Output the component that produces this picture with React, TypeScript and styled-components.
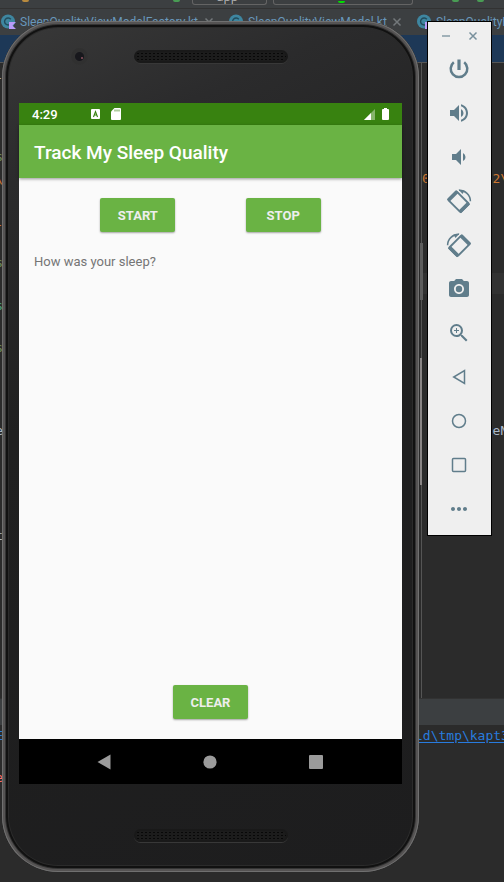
import React from "react";
import styled, { createGlobalStyle } from "styled-components";
import { MdMoreHoriz, MdPhotoCamera, MdVolumeDown, MdVolumeUp, MdZoomIn } from "react-icons/md";

const GlobalStyle = createGlobalStyle`
  * { box-sizing: border-box; }
  body { margin: 0; background: #2b2b2b; }
  button { font: inherit; cursor: pointer; }
`;

const Desktop = styled.div`
  display: grid;
  min-height: 100vh;
  overflow: hidden;
  > * { grid-area: 1 / 1; min-width: 0; }
`;

/* ---------- IDE behind the emulator ---------- */

const Ide = styled.div`
  display: flex;
  flex-direction: column;
  background: #2b2b2b;
  font-family: "DejaVu Sans Mono", monospace;
  font-size: 13px;
  overflow: hidden;
`;

const RunBar = styled.div`
  flex: none;
  display: flex;
  align-items: flex-start;
  gap: 6px;
  height: 9px;
  padding-right: 14px;
  background: #3c3f41;
  border-bottom: 1px solid #323232;
`;

const RunIcons = styled.div<{ $width?: number }>`
  flex: ${(p) => (p.$width ? "none" : 1)};
  width: ${(p) => (p.$width ? `${p.$width}px` : "auto")};
  display: flex;
  justify-content: space-between;
  padding-left: ${(p) => (p.$width ? 22 : 33)}px;
  padding-right: 6px;
`;

const RunMark = styled.span<{ $color: string }>`
  width: 7px;
  height: 2px;
  border-radius: 0 0 4px 4px;
  background: ${(p) => p.$color};
`;

const RunSelect = styled.div<{ $width: number }>`
  flex: none;
  display: flex;
  align-items: flex-end;
  justify-content: center;
  width: ${(p) => p.$width}px;
  height: 5px;
  padding: 0 24px 1px 20px;
  overflow: hidden;
  border: 1px solid #646464;
  border-top: 0;
  border-radius: 0 0 3px 3px;
  color: #bbbbbb;
  font: 12px/12px "Open Sans", sans-serif;
`;

const TabStrip = styled.div`
  flex: none;
  display: flex;
  height: 26px;
  background: #3c3f41;
`;

const Tab = styled.div<{ $width: number }>`
  flex: none;
  display: flex;
  align-items: center;
  gap: 4px;
  width: ${(p) => p.$width}px;
  color: #6897bb;
  font: 12px/26px Roboto, sans-serif;
  white-space: nowrap;
  svg { flex: none; }
`;

const TabClose = styled.button`
  display: flex;
  margin-left: auto;
  margin-right: 14px;
  padding: 0;
  border: 0;
  background: none;
  color: #73787b;
`;

const Notice = styled.div`
  flex: none;
  height: 28px;
  background: #1d3857;
  border-bottom: 1px solid #555555;
`;

const Editor = styled.div`
  flex: 1 0 635px;
  display: flex;
`;

const EditorMain = styled.div`
  flex: 1;
  border-right: 1px solid #555555;
`;

const EditorSide = styled.div`
  flex: none;
  width: 82px;
`;

const CodeLine = styled.div<{ $color: string; $space: number; $active?: boolean }>`
  height: 21px;
  margin-top: ${(p) => p.$space}px;
  background: ${(p) => (p.$active ? "#323232" : "none")};
  color: ${(p) => p.$color};
  line-height: 21px;
  white-space: pre;
`;

const GutterText = styled.div`
  width: 3px;
  overflow: hidden;
  direction: rtl;
`;

const PanelHeader = styled.div`
  flex: none;
  height: 27px;
  background: #3c3f41;
  border-top: 1px solid #323232;
`;

const Console = styled.div`
  flex: 1 0 157px;
`;

const ConsoleLine = styled.div<{ $color: string; $space: number }>`
  display: flex;
  justify-content: space-between;
  height: 21px;
  margin-top: ${(p) => p.$space}px;
  color: ${(p) => p.$color};
  line-height: 21px;
  white-space: pre;
`;

const PathLink = styled.a`
  width: 89px;
  overflow: hidden;
  color: #287bde;
  text-decoration: underline;
  text-underline-offset: 2px;
`;

/* ---------- Emulator ---------- */

const Emulator = styled.div`
  position: relative;
  display: flex;
  align-items: flex-start;
  gap: 8px;
  padding: 21px 12px 10px 2px;
`;

const Phone = styled.div`
  position: relative;
  flex: 1;
  align-self: stretch;
  display: flex;
  flex-direction: column;
  padding: 0 17px;
  border-radius: 56px;
  background: linear-gradient(155deg, #393939 0%, #2b2b2c 16%, #202020 40%, #1d1d1e 100%);
  box-shadow:
    inset 0 0 0 1px #707070,
    inset 0 0 0 3px #555353,
    inset 0 0 0 4px #343434,
    inset 0 0 0 6px #111111,
    inset 0 0 0 7px #2b2b2b;
`;

const SideKey = styled.div<{ $top: number; $height: number; $wide?: boolean }>`
  position: absolute;
  left: calc(100% + 1px);
  top: ${(p) => p.$top}px;
  width: ${(p) => (p.$wide ? 3 : 2)}px;
  height: ${(p) => p.$height}px;
  background: ${(p) => (p.$wide ? "#5d5d5d" : "#898585")};
`;

const Bezel = styled.div<{ $height: number }>`
  position: relative;
  flex: none;
  display: flex;
  align-items: center;
  justify-content: center;
  height: ${(p) => p.$height}px;
  padding-bottom: ${(p) => (p.$height > 84 ? 0 : 12)}px;
  padding-top: ${(p) => (p.$height > 84 ? 15 : 0)}px;
`;

const Speaker = styled.div`
  width: 154px;
  height: 13px;
  border-radius: 7px;
  border: 2px solid #191919;
  background: radial-gradient(circle, #080808 1px, #1c1c1c 1px) 0 0 / 4px 3px;
  box-shadow: 0 1px 0 #383838;
`;

const Lens = styled.div`
  position: absolute;
  left: 52px;
  top: 27px;
  width: 17px;
  height: 17px;
  border-radius: 50%;
  background: radial-gradient(circle, #17171c 0 4px, #303030 5px 8px);
  &::after {
    content: "";
    display: block;
    width: 2px;
    height: 2px;
    margin: 9px 0 0 10px;
    background: #70434e;
  }
`;

const Screen = styled.div`
  flex: 1;
  display: flex;
  flex-direction: column;
  background: #fafafa;
  font-family: Roboto, sans-serif;
`;

const StatusBar = styled.div`
  flex: none;
  display: flex;
  align-items: center;
  height: 22px;
  padding: 0 13px;
  background: #388210;
  color: #ffffff;
  font-size: 13px;
  font-weight: 500;
  svg { display: block; }
`;

const Notices = styled.div`
  display: flex;
  align-items: center;
  gap: 11px;
  margin-left: 33px;
`;

const Signals = styled.div`
  display: flex;
  align-items: center;
  gap: 7px;
  margin-left: auto;
`;

const AppBar = styled.header`
  flex: none;
  display: flex;
  align-items: center;
  height: 53px;
  padding: 2px 15px 0;
  background: #6ab344;
  color: #ffffff;
  box-shadow: 0 1px 3px rgba(0, 0, 0, 0.4);
`;

const Title = styled.h1`
  margin: 0;
  font-size: 19px;
  line-height: 24px;
  font-weight: 500;
`;

const Content = styled.main`
  flex: 1;
  display: flex;
  flex-direction: column;
  padding: 20px 11px;
`;

const ButtonRow = styled.div`
  display: flex;
  justify-content: space-evenly;
`;

const GreenButton = styled.button`
  width: 75px;
  height: 34px;
  padding: 0;
  border: 0;
  border-radius: 2px;
  background: #6ab344;
  color: #eeeeee;
  font-size: 13px;
  font-weight: 700;
  box-shadow: 0 1px 2px rgba(0, 0, 0, 0.35);
`;

const Question = styled.p`
  margin: 20px 4px auto;
  color: #757575;
  font-size: 13px;
  line-height: 20px;
`;

const NavBar = styled.nav`
  flex: none;
  display: grid;
  grid-template-columns: repeat(3, 106px);
  justify-content: center;
  height: 45px;
  padding-right: 2px;
  background: #000000;
`;

const NavButton = styled.button`
  display: flex;
  align-items: center;
  justify-content: center;
  padding: 0;
  border: 0;
  background: none;
  color: #9b9b9b;
`;

const ToolWindow = styled.aside`
  flex: none;
  width: 65px;
  padding: 0 2px 4px 0;
  border: 1px solid #000000;
  background: #efefef;
  color: #607d8b;
`;

const WindowBar = styled.div`
  display: flex;
  align-items: center;
  justify-content: center;
  gap: 17px;
  height: 25px;
  padding: 3px 0 0 1px;
`;

const WindowButton = styled.button`
  display: flex;
  padding: 0;
  border: 0;
  background: none;
  color: #78909c;
`;

const ToolButton = styled.button`
  display: flex;
  align-items: center;
  justify-content: center;
  width: 100%;
  height: 44px;
  padding: 0;
  border: 0;
  background: none;
  color: inherit;
`;

/* ---------- Drawings ---------- */

const CrossIcon = () => (
  <svg width="10" height="10" viewBox="0 0 10 10" fill="none" stroke="currentColor" strokeWidth="1.5">
    <path d="M1.5 1.5l7 7M8.5 1.5l-7 7" />
  </svg>
);

const KotlinIcon = () => (
  <svg width="16" height="16" viewBox="0 0 16 16">
    <circle cx="8" cy="7.5" r="7" fill="#3e86a0" />
    <path d="M10.8 5.3A3.5 3.5 0 1 0 10.8 9.7" fill="none" stroke="#234b5b" strokeWidth="1.4" />
    <path d="M9 8h7l-3.5 3.5L16 15H9z" fill="#b99bf8" />
  </svg>
);

const PowerIcon = () => (
  <svg width="24" height="24" viewBox="0 0 24 24" fill="none" stroke="currentColor">
    <path d="M6.8 5.2A8.3 8.3 0 1 0 17.2 5.2" strokeWidth="2.5" />
    <path d="M12 2.5v10.5" strokeWidth="3.2" />
  </svg>
);

const RotateIcon = ({ mirrored = false }: { mirrored?: boolean }) => (
  <svg width="24" height="24" viewBox="0 0 24 24" fill="none" stroke="currentColor" overflow="visible">
    <g transform={mirrored ? "translate(24 0) scale(-1 1)" : undefined}>
      <g transform="rotate(45 11.5 12.8)">
        <rect x="2.5" y="6.8" width="18" height="12" rx="1" strokeWidth="1.9" />
        <path d="M3.4 6.4v12.8M19.6 6.4v12.8" strokeWidth="3.6" />
      </g>
      <path d="M12 1.3A11 11 0 0 1 23.4 12.2" strokeWidth="1.5" />
      <path d="M11.5 .6l6 1.2-2 3.2z" fill="currentColor" stroke="none" />
    </g>
  </svg>
);

const BackIcon = () => (
  <svg width="24" height="24" viewBox="0 0 24 24" fill="none" stroke="currentColor" strokeWidth="1.5">
    <path d="M17.5 5.5v13L6.7 12z" />
  </svg>
);

const HomeIcon = () => (
  <svg width="24" height="24" viewBox="0 0 24 24" fill="none" stroke="currentColor" strokeWidth="1.5">
    <circle cx="12" cy="12" r="6.5" />
  </svg>
);

const OverviewIcon = () => (
  <svg width="24" height="24" viewBox="0 0 24 24" fill="none" stroke="currentColor" strokeWidth="1.5">
    <rect x="5.5" y="5.5" width="13" height="13" rx="1" />
  </svg>
);

const tools = [
  { label: "Power", icon: <PowerIcon /> },
  { label: "Volume up", icon: <MdVolumeUp size={24} /> },
  { label: "Volume down", icon: <MdVolumeDown size={24} /> },
  { label: "Rotate left", icon: <RotateIcon /> },
  { label: "Rotate right", icon: <RotateIcon mirrored /> },
  { label: "Take screenshot", icon: <MdPhotoCamera size={24} /> },
  { label: "Zoom mode", icon: <MdZoomIn size={24} /> },
  { label: "Back", icon: <BackIcon /> },
  { label: "Home", icon: <HomeIcon /> },
  { label: "Overview", icon: <OverviewIcon /> },
  { label: "More", icon: <MdMoreHoriz size={24} /> },
];

const gutterLines = [
  { text: "-", color: "#a9b7c6", space: 4 },
  { text: "s", color: "#6a8759", space: 58 },
  { text: "\\", color: "#cc7832", space: 1 },
  { text: "-", color: "#cc7832", space: 25 },
  { text: "s", color: "#6a8759", space: 17 },
  { text: "s", color: "#499c7a", space: 22 },
  { text: "s", color: "#6a8759", space: 21 },
  { text: "e", color: "#a9b7c6", space: 62 },
  { text: "t", color: "#a9b7c6", space: 84 },
];

export default function App() {
  return (
    <>
      <GlobalStyle />
      <Desktop>
        <Ide>
          <RunBar>
            <RunIcons $width={186}>
              <RunMark $color="#b88a3e" />
              <RunMark $color="#499c54" />
            </RunIcons>
            <RunSelect $width={75}>app</RunSelect>
            <RunSelect $width={140}>
              <RunMark $color="#00e000" />
            </RunSelect>
            <RunIcons>
              <RunMark $color="#499c54" />
              <RunMark $color="#499c54" />
            </RunIcons>
          </RunBar>
          <TabStrip>
            <Tab $width={228}>
              <KotlinIcon />
              SleepQualityViewModelFactory.kt
              <TabClose aria-label="Close SleepQualityViewModelFactory.kt"><CrossIcon /></TabClose>
            </Tab>
            <Tab $width={188}>
              <KotlinIcon />
              SleepQualityViewModel.kt
              <TabClose aria-label="Close SleepQualityViewModel.kt"><CrossIcon /></TabClose>
            </Tab>
            <Tab $width={228}>
              <KotlinIcon />
              SleepQualityFragment.kt
            </Tab>
          </TabStrip>
          <Notice />
          <Editor>
            <EditorMain>
              {gutterLines.map((line, i) => (
                <CodeLine key={i} $color={line.color} $space={line.space}>
                  <GutterText>{line.text}</GutterText>
                </CodeLine>
              ))}
            </EditorMain>
            <EditorSide>
              <CodeLine $color="#cc7832" $space={105}>{"0        2\\"}</CodeLine>
              <CodeLine $color="#a9b7c6" $space={84} $active> </CodeLine>
              <CodeLine $color="#a9b7c6" $space={126}>{"         eN"}</CodeLine>
            </EditorSide>
          </Editor>
          <PanelHeader />
          <Console>
            <ConsoleLine $color="#287bde" $space={0}>
              <GutterText>E</GutterText>
              <PathLink href="#kapt">{"ld\\tmp\\kapt3"}</PathLink>
            </ConsoleLine>
            <ConsoleLine $color="#ff6b68" $space={21}>
              <GutterText>e</GutterText>
            </ConsoleLine>
          </Console>
        </Ide>

        <Emulator>
          <Phone>
            <SideKey $top={222} $height={57} $wide />
            <SideKey $top={337} $height={127} />
            <Bezel $height={82}>
              <Lens />
              <Speaker />
            </Bezel>
            <Screen>
              <StatusBar>
                <time>4:29</time>
                <Notices>
                  <svg width="9" height="10" viewBox="0 0 9 10">
                    <rect width="9" height="10" rx="1" fill="#fff" />
                    <path d="M2.5 8l2-5.5 2 5.5M3 6h3" fill="none" stroke="#388210" strokeWidth="1.1" />
                  </svg>
                  <svg width="10" height="12" viewBox="0 0 10 12">
                    <path d="M3.5 0H9a1 1 0 0 1 1 1v10a1 1 0 0 1-1 1H1a1 1 0 0 1-1-1V3.5z" fill="#fff" />
                    <path d="M4 1.5v2M6 1.5v2M8 1.5v2" stroke="#388210" strokeWidth=".8" />
                  </svg>
                </Notices>
                <Signals>
                  <svg width="11" height="11" viewBox="0 0 11 11">
                    <path d="M11 0v11H0z" fill="#85b46c" />
                    <path d="M7 4v7H0z" fill="#fff" />
                  </svg>
                  <svg width="7" height="12" viewBox="0 0 7 12">
                    <path d="M2 0h3v1h1a1 1 0 0 1 1 1v9a1 1 0 0 1-1 1H1a1 1 0 0 1-1-1V2a1 1 0 0 1 1-1h1z" fill="#fff" />
                  </svg>
                </Signals>
              </StatusBar>
              <AppBar>
                <Title>Track My Sleep Quality</Title>
              </AppBar>
              <Content>
                <ButtonRow>
                  <GreenButton>START</GreenButton>
                  <GreenButton>STOP</GreenButton>
                </ButtonRow>
                <Question>How was your sleep?</Question>
                <ButtonRow>
                  <GreenButton>CLEAR</GreenButton>
                </ButtonRow>
              </Content>
              <NavBar>
                <NavButton aria-label="Back">
                  <svg width="14" height="16" viewBox="0 0 14 16"><path d="M13.5.5v15L.5 8z" fill="currentColor" /></svg>
                </NavButton>
                <NavButton aria-label="Home">
                  <svg width="14" height="14" viewBox="0 0 14 14"><circle cx="7" cy="7" r="6.6" fill="currentColor" /></svg>
                </NavButton>
                <NavButton aria-label="Overview">
                  <svg width="14" height="14" viewBox="0 0 14 14"><rect width="14" height="14" rx="1" fill="currentColor" /></svg>
                </NavButton>
              </NavBar>
            </Screen>
            <Bezel $height={88}>
              <Speaker />
            </Bezel>
          </Phone>

          <ToolWindow>
            <WindowBar>
              <WindowButton aria-label="Minimize">
                <svg width="10" height="10" viewBox="0 0 10 10"><path d="M1 5h8" stroke="currentColor" strokeWidth="1.3" /></svg>
              </WindowButton>
              <WindowButton aria-label="Close"><CrossIcon /></WindowButton>
            </WindowBar>
            {tools.map((tool) => (
              <ToolButton key={tool.label} aria-label={tool.label}>{tool.icon}</ToolButton>
            ))}
          </ToolWindow>
        </Emulator>
      </Desktop>
    </>
  );
}
